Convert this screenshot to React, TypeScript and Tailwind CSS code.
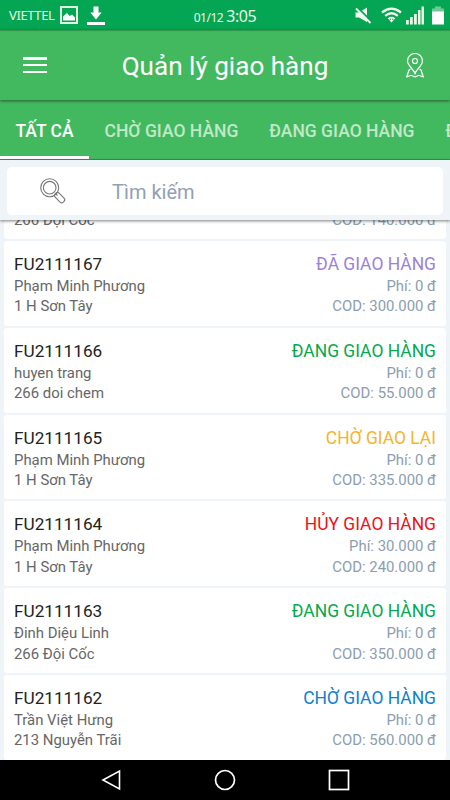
import { useState } from 'react'

interface Order {
  code: string
  customer: string
  address: string
  status: keyof typeof statuses
  fee: string
  cod: string
}

const statuses = {
  waiting: { text: 'CHỜ GIAO HÀNG', color: 'text-[#0d7fd3]' },
  shipping: { text: 'ĐANG GIAO HÀNG', color: 'text-[#04a84f]' },
  delivered: { text: 'ĐÃ GIAO HÀNG', color: 'text-[#9a82da]' },
  retry: { text: 'CHỜ GIAO LẠI', color: 'text-[#f6b42c]' },
  cancelled: { text: 'HỦY GIAO HÀNG', color: 'text-[#ee1118]' },
}

const orders: Order[] = [
  { code: 'FU2111168', customer: 'Đinh Diệu Linh', address: '266 Đội Cốc', status: 'shipping', fee: '0', cod: '140.000' },
  { code: 'FU2111167', customer: 'Phạm Minh Phương', address: '1 H Sơn Tây', status: 'delivered', fee: '0', cod: '300.000' },
  { code: 'FU2111166', customer: 'huyen trang', address: '266 doi chem', status: 'shipping', fee: '0', cod: '55.000' },
  { code: 'FU2111165', customer: 'Phạm Minh Phương', address: '1 H Sơn Tây', status: 'retry', fee: '0', cod: '335.000' },
  { code: 'FU2111164', customer: 'Phạm Minh Phương', address: '1 H Sơn Tây', status: 'cancelled', fee: '30.000', cod: '240.000' },
  { code: 'FU2111163', customer: 'Đinh Diệu Linh', address: '266 Đội Cốc', status: 'shipping', fee: '0', cod: '350.000' },
  { code: 'FU2111162', customer: 'Trần Việt Hưng', address: '213 Nguyễn Trãi', status: 'waiting', fee: '0', cod: '560.000' },
]

const tabs = ['TẤT CẢ', 'CHỜ GIAO HÀNG', 'ĐANG GIAO HÀNG', 'ĐÃ GIAO HÀNG']

function StatusBar() {
  return (
    <div className="grid h-[30px] shrink-0 grid-cols-3 items-center bg-[#04a653] font-['Noto_Sans',sans-serif] text-[#e9f8e6]">
      <div className="flex items-center pl-[9px]">
        <span className="w-[51px] text-[13px] leading-none tracking-[-0.4px]">VIETTEL</span>
        <svg width="18" height="18" viewBox="0 0 18 18" fill="none">
          <rect x="1" y="1" width="16" height="16" stroke="#dff5df" strokeWidth="2" />
          <path d="M3 14.500v-4l4-3.500 2.500 3 2.500-1.500 3 3v3z" fill="#fff" />
        </svg>
        <svg className="mt-[1px] ml-[9px]" width="18" height="20" viewBox="0 0 18 20" fill="#fff">
          <path d="M6.500 0.500h5v6h3.200L9 13.500 3.300 6.500h3.200zM0 16h18v3H0z" />
        </svg>
      </div>
      <div className="flex items-baseline justify-center pt-[1px] leading-none">
        <span className="mr-[3px] text-[12px] tracking-[-0.5px]">01/12</span>
        <span className="text-[16px] tracking-[-0.4px]">3:05</span>
      </div>
      <div className="flex items-center justify-end pr-[6px]">
        <svg width="17" height="17" viewBox="0 0 17 17">
          <path d="M0.500 5.500h3.500l8-5v14.500l-8-4.500h-3.500z" fill="#f2fbf0" />
          <path d="M1.500 -0.500l15.500 15.500" stroke="#04a653" strokeWidth="2" />
          <path d="M1 1.500l14.500 14.500" stroke="#f2fbf0" strokeWidth="2" />
        </svg>
        <svg className="ml-[9px]" width="21" height="17" viewBox="0 0 21 17" fill="none">
          <path d="M1 5.500Q10.500-2.300 20 5.500M4.200 8.800Q10.500 3.600 16.800 8.800" stroke="#f2fbf0" strokeWidth="2.300" />
          <path d="M6.700 11.200Q10.500 8.300 14.300 11.200L10.500 15.500z" fill="#f2fbf0" />
          <path d="M8.700 12.300h1.200M11.200 12.300h1.200" stroke="#4b8b62" strokeWidth="1.200" />
        </svg>
        <svg className="ml-[4px]" width="18" height="19" viewBox="0 0 18 19">
          <path d="M0 14h2.800v4.500H0zM4 11h2.800v7.500H4zM8 8h2.800v10.500H8zM12 4h2.500v14.500H12zM15.500 0.500H18v18h-2.500z" fill="#e9f8e6" />
        </svg>
        <svg className="ml-[8px]" width="12" height="19" viewBox="0 0 12 19">
          <path d="M3 0.500h6v2h3v3.500H0V2.500h3z" fill="#6fc997" />
          <path d="M0 5.500h12v13H0z" fill="#fff" />
        </svg>
      </div>
    </div>
  )
}

function AppBar() {
  return (
    <header className="relative z-10 flex h-[70px] shrink-0 items-center justify-between bg-[#43b95f] px-[23px] text-white shadow-[0_1px_3px_rgba(0,0,0,0.5),inset_0_2px_1px_-1px_rgba(0,90,30,0.35)]">
      <button aria-label="Menu" className="flex h-4 w-6 flex-col justify-between">
        <span className="h-[2.5px] w-full bg-white" />
        <span className="h-[2.5px] w-full bg-white" />
        <span className="h-[2.5px] w-full bg-white" />
      </button>
      <h1 className="pt-[2px] pr-[3px] text-[26.1px] leading-none">Quản lý giao hàng</h1>
      <button aria-label="Map" className="mr-[3px]">
        <svg width="18" height="25" viewBox="0 0 18 25" fill="none" stroke="#fff" strokeWidth="1.200">
          <path d="M9 20.500C7.500 16 1.500 12.500 1.500 8a7.500 7.500 0 0 1 15 0c0 4.500-6 8-7.500 12.500z" />
          <circle cx="9" cy="8" r="2.500" />
          <path d="M4.500 16L3 17 0.700 24l4.300-1.700L9 24l4-1.700 4.300 1.700L15 17l-1.500-1" strokeLinejoin="round" />
        </svg>
      </button>
    </header>
  )
}

function OrderCard({ order }: { order: Order }) {
  const status = statuses[order.status]
  return (
    <li className="flex h-[84.8px] shrink-0 justify-between rounded-[3px] bg-white px-[10px] pt-[12px] text-[14.9px] leading-[20.4px]">
      <div className="text-[#666]">
        <p className="text-[17.2px] leading-[23px] text-[#222]">{order.code}</p>
        <p>{order.customer}</p>
        <p>{order.address}</p>
      </div>
      <div className="text-right text-[#8c9dae]">
        <p className={`text-[17.45px] leading-[23px] ${status.color}`}>{status.text}</p>
        <p>Phí: {order.fee} đ</p>
        <p>COD: {order.cod} đ</p>
      </div>
    </li>
  )
}

export default function App() {
  const [active, setActive] = useState(0)
  const [query, setQuery] = useState('')

  return (
    <div className="flex h-[800px] w-[450px] flex-col overflow-hidden bg-[#eff4f8] font-[Roboto,sans-serif]">
      <StatusBar />
      <AppBar />

      {/* Tabs */}
      <nav className="flex h-[60px] shrink-0 overflow-hidden border-b border-[#1ea544] bg-[#43b95f]">
        {tabs.map((tab, i) => (
          <button
            key={tab}
            onClick={() => setActive(i)}
            className={`h-[60px] shrink-0 border-b-4 px-[15.5px] pt-[6px] text-[17.5px] font-medium whitespace-nowrap ${i === active ? 'border-white text-white' : 'border-transparent text-[#c0e8c9]'}`}
          >
            {tab}
          </button>
        ))}
      </nav>

      {/* Search */}
      <div className="relative z-10 h-[60px] shrink-0 bg-[#eff4f8] px-[7px] pt-[7px] shadow-[0_1px_3px_rgba(0,0,0,0.5)]">
        <label className="flex h-[48px] items-center rounded-[5px] bg-white pl-[33px]">
          <svg width="27" height="27" viewBox="0 0 27 27" fill="none" stroke="#777" strokeWidth="1.100">
            <circle cx="9.700" cy="9.700" r="9" />
            <circle cx="9.700" cy="9.700" r="6.300" />
            <path d="M16 16l1.500 1.500" />
            <rect x="16" y="-2.800" width="11.500" height="5.600" rx="2.300" transform="translate(5.300 5.300) rotate(45) translate(-1.500 0)" />
          </svg>
          <input
            value={query}
            onChange={e => setQuery(e.target.value)}
            placeholder="Tìm kiếm"
            className="ml-[45px] w-[300px] pt-[2px] text-[20px] text-[#333] outline-none placeholder:text-[#8fa1b5]"
          />
        </label>
      </div>

      {/* Orders, scrolled so the first card sits under the search bar */}
      <main className="min-h-0 flex-1 overflow-hidden">
        <ul className="-mt-[65.8px] flex flex-col gap-[2px] px-[4px]">
          {orders.map(order => <OrderCard key={order.code} order={order} />)}
        </ul>
      </main>

      <footer className="flex h-[40px] shrink-0 items-center bg-black pl-[101px]">
        <svg width="20" height="22" viewBox="0 0 20 22" fill="none" stroke="#fff" strokeWidth="1.600">
          <path d="M2 11L18.500 2v18z" />
        </svg>
        <svg className="ml-[93px]" width="22" height="22" viewBox="0 0 22 22" fill="none" stroke="#fff" strokeWidth="1.700">
          <circle cx="11" cy="11" r="9.500" />
        </svg>
        <svg className="ml-[92px]" width="22" height="22" viewBox="0 0 22 22" fill="none" stroke="#fff" strokeWidth="1.700">
          <rect x="1.500" y="1.500" width="19" height="19" />
        </svg>
      </footer>
    </div>
  )
}
